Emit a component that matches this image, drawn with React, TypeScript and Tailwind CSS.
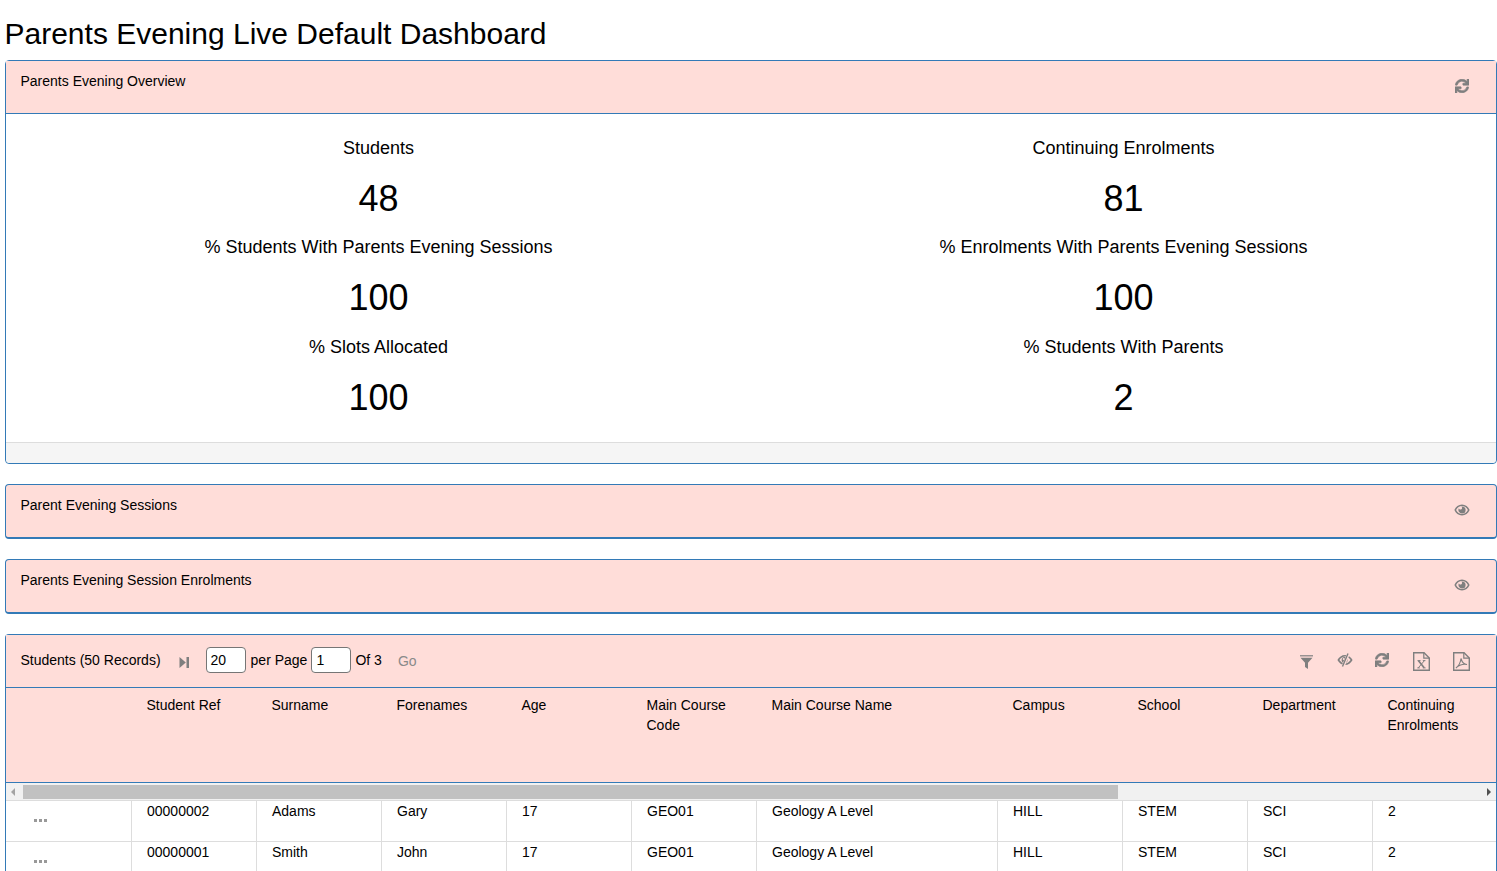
import React from "react";
import { FaSync } from "react-icons/fa";

const columns = [
  { label: "Student Ref", width: "w-[125px]" },
  { label: "Surname", width: "w-[125px]" },
  { label: "Forenames", width: "w-[125px]" },
  { label: "Age", width: "w-[125px]" },
  { label: "Main Course Code", width: "w-[125px]" },
  { label: "Main Course Name", width: "w-[241px]" },
  { label: "Campus", width: "w-[125px]" },
  { label: "School", width: "w-[125px]" },
  { label: "Department", width: "w-[125px]" },
  { label: "Continuing Enrolments", width: "w-[124px]" },
];

const rows = [
  ["00000002", "Adams", "Gary", "17", "GEO01", "Geology A Level", "HILL", "STEM", "SCI", "2"],
  ["00000001", "Smith", "John", "17", "GEO01", "Geology A Level", "HILL", "STEM", "SCI", "2"],
];

const stats = [
  ["Students", "48", "Continuing Enrolments", "81"],
  ["% Students With Parents Evening Sessions", "100", "% Enrolments With Parents Evening Sessions", "100"],
  ["% Slots Allocated", "100", "% Students With Parents", "2"],
];

function EyeIcon({ className }: { className?: string }) {
  return (
    <svg viewBox="0 0 16 12" className={className} aria-hidden="true">
      <path fill="currentColor" fillRule="evenodd" d="M8 0.5C4.6 0.5 1.7 2.6 0.4 6C1.7 9.4 4.6 11.5 8 11.5S14.3 9.4 15.6 6C14.3 2.6 11.4 0.5 8 0.5ZM8 2C5.6 2 3.4 3.5 2.1 6C3.4 8.5 5.6 10 8 10S12.6 8.5 13.9 6C12.6 3.5 10.4 2 8 2Z" />
      <path fill="currentColor" d="M8 2.4A3.6 3.6 0 1 1 8 9.6A3.6 3.6 0 0 1 4.9 4.2A1.6 1.6 0 1 0 7.2 2.5Q7.6 2.4 8 2.4Z" />
    </svg>
  );
}

function EyeSlashIcon({ className }: { className?: string }) {
  return (
    <svg viewBox="0 0 16 14" className={className} aria-hidden="true">
      <path fill="currentColor" fillRule="evenodd" d="M8 2C4.800 2 2 4 0.400 7C2 10 4.800 12 8 12S14 10 15.600 7C14 4 11.200 2 8 2ZM8 3.600C5.800 3.600 3.800 5 2.400 7C3.800 9 5.800 10.400 8 10.400S12.200 9 13.600 7C12.200 5 10.200 3.600 8 3.600Z" />
      <circle cx="7.600" cy="7" r="3" fill="currentColor" />
      <circle cx="6.700" cy="6" r="1" fill="#ffddd9" />
      <path stroke="#ffddd9" strokeWidth="3" d="M11.500 0.500L6 13.500" />
      <path stroke="currentColor" strokeWidth="1.400" d="M11 0.500L5.500 13.500" />
    </svg>
  );
}

function FilterIcon({ className }: { className?: string }) {
  return (
    <svg viewBox="0 0 13 14" className={className} aria-hidden="true">
      <rect x="0" y="0" width="13" height="1.500" fill="currentColor" opacity="0.8" />
      <path fill="currentColor" d="M0.500 2.800H12.500L8 7.800V14L5 12V7.800Z" />
    </svg>
  );
}

function StepIcon({ className }: { className?: string }) {
  return (
    <svg viewBox="0 0 10 12" className={className} aria-hidden="true">
      <path fill="currentColor" d="M0.500 0.500L6.800 6L0.500 11.500Z" />
      <rect x="7.500" y="0.500" width="2.500" height="11" fill="currentColor" />
    </svg>
  );
}

function FileOutline({ children, className }: { children: React.ReactNode; className?: string }) {
  return (
    <svg viewBox="0 0 17 19" className={className} aria-hidden="true">
      <path fill="none" stroke="currentColor" strokeWidth="1.400" d="M0.700 0.700H11L16.300 6V18.300H0.700Z" />
      <path fill="none" stroke="currentColor" strokeWidth="1.200" d="M10.800 0.700V6.200H16.300" />
      {children}
    </svg>
  );
}

function CollapsedPanel({ title }: { title: string }) {
  return (
    <div className="mb-5 flex h-[55px] justify-between rounded border border-b-2 border-[#337ab7] bg-[#ffddd9] pl-[14.5px] pr-[26px]">
      <span className="pt-[10px] text-sm">{title}</span>
      <EyeIcon className="mt-[19px] h-[12px] w-[16px] text-[#7f7f7f]" />
    </div>
  );
}

function Stat({ label, value }: { label: string; value: string }) {
  return (
    <div className="text-center">
      <div className="h-[27px] text-lg leading-[26px]">{label}</div>
      <div className="h-[72.5px] text-4xl leading-[74px]">{value}</div>
    </div>
  );
}

export default function App() {
  return (
    <div className="h-[871px] overflow-hidden bg-white pl-[5px] font-['Liberation_Sans',Arial,sans-serif] text-black">
      <h1 className="-ml-[0.5px] flex h-[60px] items-end pb-[8px] text-[30px] leading-[36px]">Parents Evening Live Default Dashboard</h1>

      <div className="mb-5 rounded border border-[#337ab7]">
        <div className="flex h-[53px] justify-between border-b border-[#337ab7] bg-[#ffddd9] pl-[14.5px] pr-[27px]">
          <span className="pt-[10px] text-sm">Parents Evening Overview</span>
          <FaSync className="mt-[18px] h-[14px] w-[14px] text-[#7f7f7f]" stroke="currentColor" strokeWidth={24} />
        </div>
        <div className="grid h-[328px] grid-cols-2 content-start pt-[20.9px]">
          {stats.map((s) => (
            <React.Fragment key={s[0]}>
              <Stat label={s[0]} value={s[1]} />
              <Stat label={s[2]} value={s[3]} />
            </React.Fragment>
          ))}
        </div>
        <div className="h-[21px] rounded-b border-t border-[#dddddd] bg-[#f5f5f5]" />
      </div>

      <CollapsedPanel title="Parent Evening Sessions" />
      <CollapsedPanel title="Parents Evening Session Enrolments" />

      <div className="rounded-t border border-b-0 border-[#337ab7] text-sm">
        <div className="flex h-[53px] items-center border-b border-[#337ab7] bg-[#ffddd9] pb-[2px] pl-[14.5px] pr-[26px]">
          <span>Students (50 Records)</span>
          <StepIcon className="ml-[18px] h-[13px] w-[10px] translate-y-[2px] text-[#7f7f7f]" />
          <div className="ml-[17px] flex h-[26px] w-[40px] items-center rounded-sm border border-[#767676] bg-white pl-[4px]">20</div>
          <span className="ml-[5px]">per Page</span>
          <div className="ml-[4px] flex h-[26px] w-[40px] items-center rounded-sm border border-[#767676] bg-white pl-[4px]">1</div>
          <span className="ml-[4px]">Of 3</span>
          <span className="ml-[16px] pt-[2px] text-[#8a8a8a]">Go</span>
          <div className="ml-auto flex items-center text-[#7f7f7f]">
            <FilterIcon className="h-[14px] w-[13px] translate-y-[2px]" />
            <EyeSlashIcon className="ml-[24px] h-[14px] w-[16px]" />
            <FaSync className="ml-[22px] h-[14px] w-[14px]" stroke="currentColor" strokeWidth={24} />
            <FileOutline className="ml-[24px] h-[19px] w-[17px] translate-y-[1px]">
              <path fill="none" stroke="currentColor" strokeWidth="1.700" d="M5.500 8.800L11.200 15.800" />
              <path fill="none" stroke="currentColor" strokeWidth="1" d="M11.300 8.800L5.300 15.800M4.500 8.600H7.500M9.800 8.600H12.400M4.300 15.900H6.800M9.800 15.900H12.600" />
            </FileOutline>
            <FileOutline className="ml-[23px] h-[19px] w-[17px] translate-y-[1px]">
              <path fill="none" stroke="currentColor" strokeWidth="1.100" d="M8 6.500C7.700 9.500 6 13.500 3 16C5 13.500 9.500 11.500 14 12.500C11 12.500 9 10 8 6.500Z" />
            </FileOutline>
          </div>
        </div>

        <div className="flex h-[95px] border-b border-[#337ab7] bg-[#ffddd9] pl-[125px]">
          {columns.map((c) => (
            <div key={c.label} className={`${c.width} pl-[15.5px] pr-[16px] pt-[7px] leading-[20px]`}>
              {c.label}
            </div>
          ))}
        </div>

        <div className="flex h-[18px] items-center border-b border-[#dddddd] bg-[#f1f1f1] px-[5px]">
          <div className="h-0 w-0 border-y-[4px] border-r-[4px] border-y-transparent border-r-[#a3a3a3]" />
          <div className="ml-[8px] h-[14px] w-[1095px] bg-[#c1c1c1]" />
          <div className="ml-auto h-0 w-0 border-y-[4px] border-l-[4px] border-y-transparent border-l-[#505050]" />
        </div>

        {rows.map((row) => (
          <div key={row[0]} className="flex h-[41px] border-b border-[#dddddd]">
            <div className="flex w-[125px] gap-[2px] pl-[28px] pt-[18px]">
              <span className="h-[3px] w-[3px] bg-[#999999]" />
              <span className="h-[3px] w-[3px] bg-[#999999]" />
              <span className="h-[3px] w-[3px] bg-[#999999]" />
            </div>
            {row.map((cell, i) => (
              <div key={i} className={`${columns[i].width} border-l border-[#dddddd] pl-[15px] leading-[20px]`}>
                {cell}
              </div>
            ))}
          </div>
        ))}
      </div>
    </div>
  );
}
